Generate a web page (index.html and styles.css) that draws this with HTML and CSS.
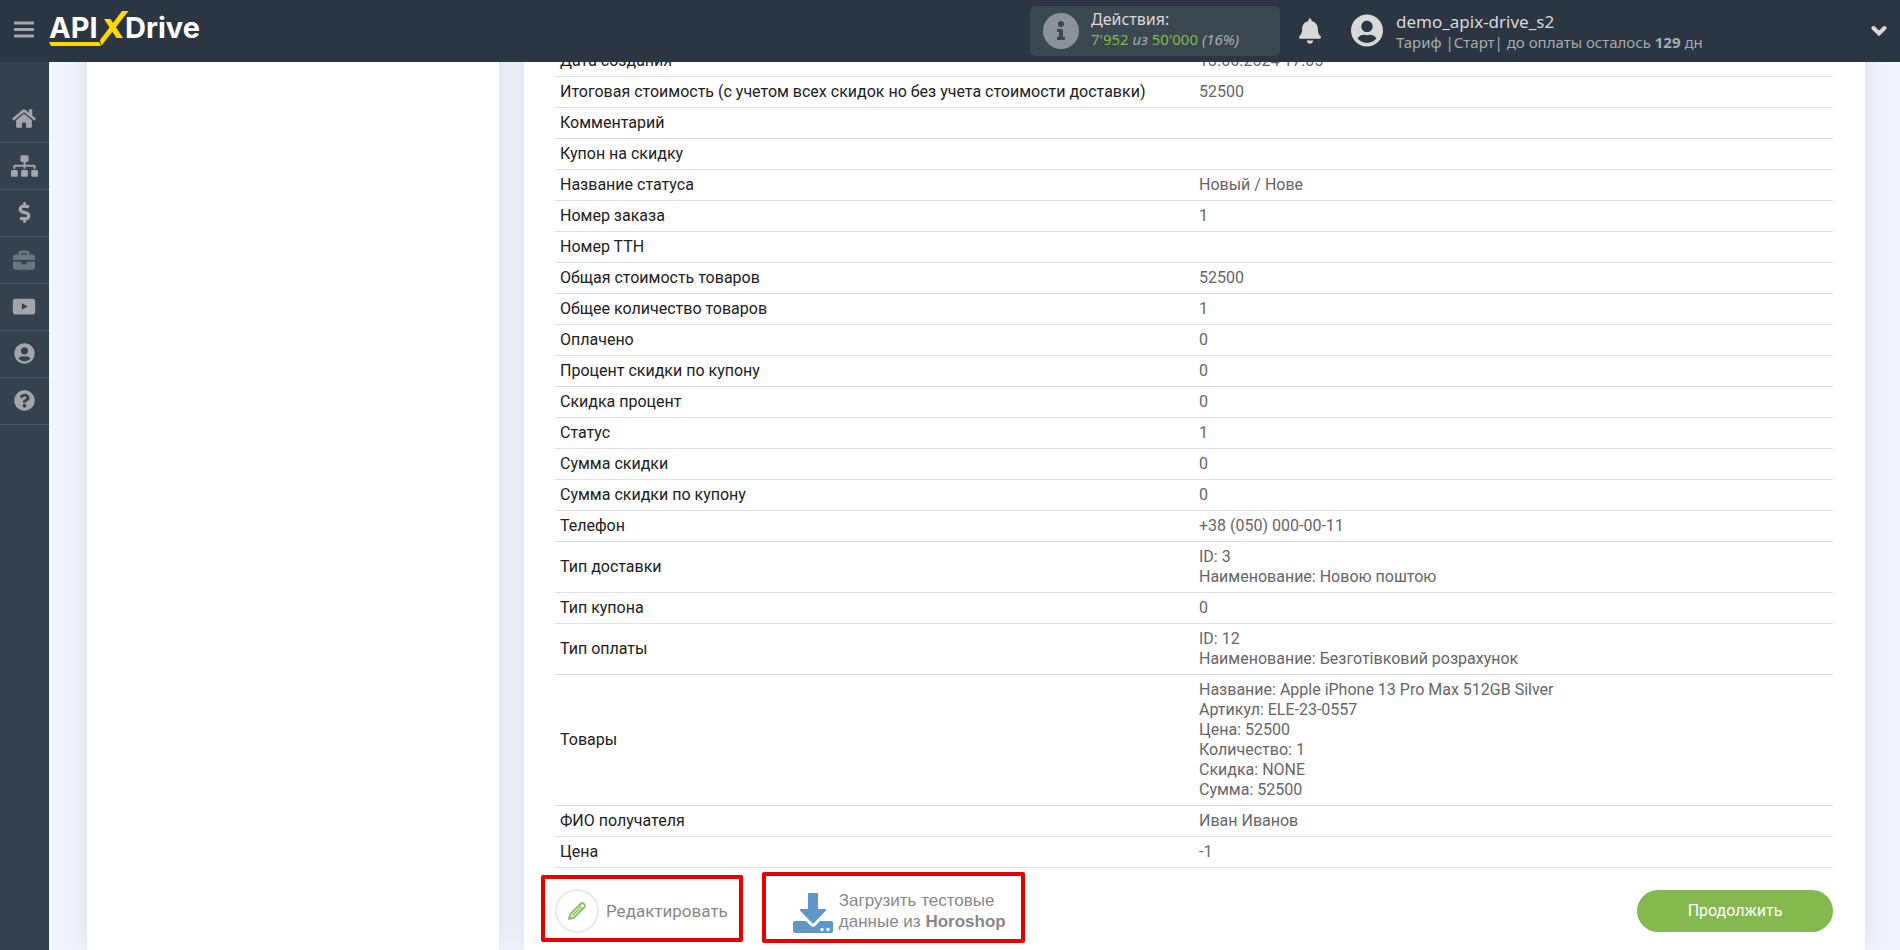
FILE: index.html
```html
<!DOCTYPE html>
<html lang="ru">
<head>
<meta charset="utf-8">
<title>APIXDrive</title>
<link rel="stylesheet" href="styles.css">
</head>
<body>
<header class="topbar">
  <button class="menu-btn" type="button" aria-label="Меню">
    <svg width="20" height="18" viewBox="0 0 20 18"><path d="M1 2h18M1 8.500h18M1 15h18" stroke="currentColor" stroke-width="3" stroke-linecap="round"/></svg>
  </button>
  <a class="logo" href="#" aria-label="APIXDrive">
    <svg width="156" height="40" viewBox="0 0 156 40">
      <text class="logo-text" x="0" y="27">API</text>
      <text class="logo-text" x="76" y="27">Drive</text>
      <path d="M55 8h6.500L74 27h-6.500z" fill="#ffd800"/>
      <path d="M73 0h6.500L53 34h-1l-1-5z" fill="#ffd800"/>
      <path d="M0 31h50l2 4H2z" fill="#ffd800"/>
    </svg>
  </a>
  <section class="usage">
    <svg class="usage-icon" width="36" height="36" viewBox="0 0 36 36"><circle cx="18" cy="18" r="18" fill="#8b9298"/><circle cx="18" cy="11" r="3" fill="#3b4850"/><path d="M14 16h6v8h2v3h-8v-3h2v-5h-2z" fill="#3b4850"/></svg>
    <div class="usage-body">
      <div class="usage-title">Действия:</div>
      <div class="usage-count"><span class="num">7'952</span> <i>из</i> <span class="num">50'000</span> <i>(16%)</i></div>
    </div>
  </section>
  <button class="bell" type="button" aria-label="Уведомления">
    <svg width="22" height="26" viewBox="0 0 448 512"><path fill="currentColor" d="M224 512c35.320 0 63.970-28.650 63.970-64H160.030c0 35.350 28.650 64 63.970 64zm215.390-149.710c-19.320-20.760-55.470-51.990-55.470-154.290 0-77.700-54.480-139.900-127.940-155.160V32c0-17.670-14.320-32-31.980-32s-31.980 14.330-31.980 32v20.840C118.560 68.100 64.080 130.300 64.080 208c0 102.300-36.150 133.530-55.470 154.290-6 6.450-8.660 14.160-8.610 21.710.110 16.400 12.980 32 32.100 32h383.800c19.120 0 32-15.600 32.100-32 .050-7.550-2.610-15.270-8.610-21.710z"/></svg>
  </button>
  <a class="account" href="#">
    <svg width="32" height="33" viewBox="0 0 496 512"><path fill="currentColor" d="M248 8C111 8 0 119 0 256s111 248 248 248 248-111 248-248S385 8 248 8zm0 96c48.600 0 88 39.400 88 88s-39.400 88-88 88-88-39.400-88-88 39.400-88 88-88zm0 344c-58.700 0-111.300-26.600-146.500-68.200 18.800-35.400 55.600-59.800 98.500-59.800 2.400 0 4.800.4 7.100 1.100 13 4.200 26.600 6.900 40.900 6.900 14.300 0 28-2.700 40.900-6.900 2.300-.7 4.700-1.100 7.100-1.100 42.900 0 79.700 24.400 98.500 59.800C359.300 421.400 306.700 448 248 448z"/></svg>
    <span class="account-body">
      <span class="account-name">demo_apix-drive_s2</span>
      <span class="account-plan">Тариф |Старт| до оплаты осталось <b>129</b> дн</span>
    </span>
  </a>
  <button class="chevron" type="button" aria-label="Развернуть">
    <svg width="16" height="12" viewBox="0 0 16 12"><path d="M2.500 3l5.500 5.500L13.500 3" fill="none" stroke="currentColor" stroke-width="4" stroke-linecap="round"/></svg>
  </button>
</header>

<nav class="sidebar">
  <a class="side-link" href="#" aria-label="Главная"><svg width="24" height="21" viewBox="0 0 576 512"><path fill="currentColor" d="M280.370 148.260L96 300.110V464a16 16 0 0 0 16 16l112.060-.290a16 16 0 0 0 15.920-16V368a16 16 0 0 1 16-16h64a16 16 0 0 1 16 16v95.640a16 16 0 0 0 16 16.050L464 480a16 16 0 0 0 16-16V300L295.670 148.260a12.190 12.190 0 0 0-15.300 0zM571.600 251.470L488 182.560V44.050a12 12 0 0 0-12-12h-56a12 12 0 0 0-12 12v72.610L318.470 43a48 48 0 0 0-61 0L4.340 251.470a12 12 0 0 0-1.600 16.900l25.500 31A12 12 0 0 0 45.150 301l235.220-193.740a12.190 12.190 0 0 1 15.300 0L530.900 301a12 12 0 0 0 16.900-1.600l25.500-31a12 12 0 0 0-1.700-16.930z"/></svg></a>
  <a class="side-link" href="#" aria-label="Связи"><svg width="27" height="22" viewBox="0 0 640 512"><path fill="currentColor" d="M128 352H32c-17.670 0-32 14.330-32 32v96c0 17.670 14.330 32 32 32h96c17.670 0 32-14.330 32-32v-96c0-17.670-14.330-32-32-32zm-24-80h192v48h48v-48h192v48h48v-57.590c0-21.170-17.230-38.410-38.410-38.410H344v-64h40c17.670 0 32-14.330 32-32V32c0-17.670-14.330-32-32-32H256c-17.670 0-32 14.330-32 32v96c0 17.670 14.330 32 32 32h40v64H94.410C73.230 224 56 241.230 56 262.410V320h48v-48zm264 80h-96c-17.670 0-32 14.330-32 32v96c0 17.670 14.330 32 32 32h96c17.670 0 32-14.330 32-32v-96c0-17.670-14.330-32-32-32zm240 0h-96c-17.670 0-32 14.330-32 32v96c0 17.670 14.330 32 32 32h96c17.670 0 32-14.330 32-32v-96c0-17.670-14.330-32-32-32z"/></svg></a>
  <a class="side-link" href="#" aria-label="Оплата"><svg width="13" height="21" viewBox="0 0 288 512"><path fill="currentColor" d="M209.200 233.400l-108-31.600C88.700 198.200 80 186.500 80 173.500c0-16.300 13.200-29.500 29.500-29.500h66.300c12.200 0 24.200 3.700 34.200 10.500 6.100 4.100 14.300 3.100 19.500-2l34.800-34c7.100-6.900 6.100-18.400-1.800-24.500C238 74.800 207.400 64.100 176 64V16c0-8.800-7.200-16-16-16h-32c-8.800 0-16 7.200-16 16v48h-2.500C45.800 64-5.400 118.700.5 183.600c4.200 46.100 39.400 83.600 83.800 96.600l102.500 30c12.500 3.700 21.200 15.300 21.200 28.300 0 16.300-13.200 29.500-29.500 29.500h-66.300C100 368 88 364.300 78 357.500c-6.100-4.100-14.300-3.100-19.500 2l-34.800 34c-7.100 6.900-6.100 18.400 1.800 24.500 24.500 19.200 55.100 29.900 86.500 30v48c0 8.800 7.200 16 16 16h32c8.800 0 16-7.200 16-16v-48.200c46.600-.9 90.300-28.600 105.700-72.700 21.500-61.600-14.600-124.800-72.500-141.700z"/></svg></a>
  <a class="side-link dim" href="#" aria-label="Проекты"><svg width="22" height="22" viewBox="0 0 512 512"><path fill="currentColor" d="M320 336c0 8.840-7.160 16-16 16h-96c-8.840 0-16-7.160-16-16v-48H0v144c0 25.600 22.400 48 48 48h416c25.600 0 48-22.400 48-48V288H320v48zm144-208h-80V80c0-25.600-22.400-48-48-48H176c-25.600 0-48 22.400-48 48v48H48c-25.600 0-48 22.400-48 48v80h512v-80c0-25.600-22.400-48-48-48zm-144 0H192V96h128v32z"/></svg></a>
  <a class="side-link" href="#" aria-label="Видео"><svg width="24" height="21" viewBox="0 0 576 512"><path fill="currentColor" fill-rule="evenodd" d="M80 64h416q64 0 64 64v256q0 64-64 64H80q-64 0-64-64V128q0-64 64-64zM236 176v160l140-80z"/></svg></a>
  <a class="side-link" href="#" aria-label="Профиль"><svg width="21" height="21" viewBox="0 0 496 512"><path fill="currentColor" d="M248 8C111 8 0 119 0 256s111 248 248 248 248-111 248-248S385 8 248 8zm0 96c48.600 0 88 39.400 88 88s-39.400 88-88 88-88-39.400-88-88 39.400-88 88-88zm0 344c-58.700 0-111.300-26.600-146.500-68.200 18.800-35.400 55.600-59.800 98.500-59.800 2.400 0 4.800.4 7.100 1.100 13 4.200 26.600 6.900 40.900 6.900 14.300 0 28-2.700 40.900-6.900 2.300-.7 4.700-1.100 7.100-1.100 42.900 0 79.700 24.400 98.500 59.800C359.300 421.400 306.700 448 248 448z"/></svg></a>
  <a class="side-link" href="#" aria-label="Помощь"><svg width="21" height="21" viewBox="0 0 512 512"><path fill="currentColor" d="M504 256c0 136.997-111.043 248-248 248S8 392.997 8 256C8 119.083 119.043 8 256 8s248 111.083 248 248zM262.655 90c-54.497 0-89.255 22.957-116.549 63.758-3.536 5.286-2.353 12.415 2.715 16.258l34.699 26.310c5.205 3.947 12.621 3.008 16.665-2.122 17.864-22.658 30.113-35.797 57.303-35.797 20.429 0 45.698 13.148 45.698 32.958 0 14.976-12.363 22.667-32.534 33.976C247.128 238.528 216 254.941 216 296v4c0 6.627 5.373 12 12 12h56c6.627 0 12-5.373 12-12v-1.333c0-28.462 83.186-29.647 83.186-106.667 0-58.002-60.165-102-116.531-102zM256 338c-25.365 0-46 20.635-46 46 0 25.364 20.635 46 46 46s46-20.636 46-46c0-25.365-20.635-46-46-46z"/></svg></a>
</nav>

<main class="content">
  <aside class="panel"></aside>
  <section class="panel details">
    <table class="fields">
      <tr><th scope="row">Дата создания</th><td>13.06.2024 17:05</td></tr>
      <tr><th scope="row">Итоговая стоимость (с учетом всех скидок но без учета стоимости доставки)</th><td>52500</td></tr>
      <tr><th scope="row">Комментарий</th><td></td></tr>
      <tr><th scope="row">Купон на скидку</th><td></td></tr>
      <tr><th scope="row">Название статуса</th><td>Новый / Нове</td></tr>
      <tr><th scope="row">Номер заказа</th><td>1</td></tr>
      <tr><th scope="row">Номер ТТН</th><td></td></tr>
      <tr><th scope="row">Общая стоимость товаров</th><td>52500</td></tr>
      <tr><th scope="row">Общее количество товаров</th><td>1</td></tr>
      <tr><th scope="row">Оплачено</th><td>0</td></tr>
      <tr><th scope="row">Процент скидки по купону</th><td>0</td></tr>
      <tr><th scope="row">Скидка процент</th><td>0</td></tr>
      <tr><th scope="row">Статус</th><td>1</td></tr>
      <tr><th scope="row">Сумма скидки</th><td>0</td></tr>
      <tr><th scope="row">Сумма скидки по купону</th><td>0</td></tr>
      <tr><th scope="row">Телефон</th><td>+38 (050) 000-00-11</td></tr>
      <tr><th scope="row">Тип доставки</th><td>ID: 3<br>Наименование: Новою поштою</td></tr>
      <tr><th scope="row">Тип купона</th><td>0</td></tr>
      <tr><th scope="row">Тип оплаты</th><td>ID: 12<br>Наименование: Безготівковий розрахунок</td></tr>
      <tr><th scope="row">Товары</th><td>Название: Apple iPhone 13 Pro Max 512GB Silver<br>Артикул: ELE-23-0557<br>Цена: 52500<br>Количество: 1<br>Скидка: NONE<br>Сумма: 52500</td></tr>
      <tr><th scope="row">ФИО получателя</th><td>Иван Иванов</td></tr>
      <tr><th scope="row">Цена</th><td>-1</td></tr>
    </table>
    <div class="actions">
      <button class="action edit" type="button">
        <span class="edit-icon"><svg width="20" height="20" viewBox="0 0 20 20" fill="none" stroke="#8cc162" stroke-width="2" stroke-linejoin="round"><path d="M2 18l1.500-5L14 2.500q1.500-1 2.700.3l.8.8q1 1.200 0 2.400L7 16.500z"/><path d="M12 4.500L15.500 8M5.500 14.500L13 7" stroke-width="1.500"/></svg></span>
        <span>Редактировать</span>
      </button>
      <button class="action load" type="button">
        <svg width="40" height="40" viewBox="0 0 40 40" fill="#5e96c8"><path d="M16 0h8q1 0 1 1v15h7q2 0 1 1.500L21 30q-1 1-2 0L7 17.500Q6 16 8 16h7V1q0-1 1-1z"/><path d="M2 28h11l5 5q2 1.500 4 0l5-5h11q2 0 2 2v8q0 2-2 2H2q-2 0-2-2v-8q0-2 2-2z"/><circle cx="29" cy="36.500" r="1.700" fill="#fff"/><circle cx="35" cy="36.500" r="1.700" fill="#fff"/></svg>
        <span>Загрузить тестовые<br>данные из <b>Horoshop</b></span>
      </button>
      <button class="continue" type="button">Продолжить</button>
    </div>
  </section>
</main>
</body>
</html>
```
FILE: styles.css
```css
* {
  box-sizing: border-box;
}

body {
  margin: 0;
  background: #f2f6fc;
  font-family: Roboto, sans-serif;
  font-size: 16px;
  line-height: 20px;
  overflow: hidden;
}

button {
  padding: 0;
  border: 0;
  background: none;
  font: inherit;
  cursor: pointer;
}

a {
  color: inherit;
  text-decoration: none;
}

svg {
  display: block;
  flex: none;
}

.topbar {
  position: fixed;
  inset: 0 0 auto 0;
  z-index: 2;
  display: flex;
  align-items: center;
  height: 62px;
  padding: 0 13px 0 14px;
  background: #2b3642;
  color: #d9d9d9;
  font-family: "Noto Sans", sans-serif;
}

.menu-btn {
  padding-bottom: 2px;
  color: #a2a6aa;
}

.logo {
  margin: 0 auto 0 15px;
}

.logo-text {
  fill: #fff;
  font-family: Inter, sans-serif;
  font-size: 29px;
  font-weight: 700;
}

.usage {
  display: flex;
  align-items: center;
  gap: 12px;
  width: 250px;
  height: 50px;
  padding-left: 13px;
  border-radius: 5px;
  background: #3b4850;
}

.usage-body {
  padding-bottom: 5px;
}

.usage-title {
  font-size: 16px;
}

.usage-count {
  font-size: 15px;
  color: #a5abb0;
}

.num {
  color: #7fb84e;
}

.bell {
  margin: 0 30px 0 19px;
  color: #d9d9d9;
}

.account {
  display: flex;
  align-items: center;
  gap: 13px;
  width: 520px;
}

.account svg {
  margin-bottom: 2px;
}

.account-body {
  display: flex;
  flex-direction: column;
  padding-top: 2px;
}

.account-name {
  font-size: 17px;
}

.account-plan {
  font-size: 15px;
  color: #a5abb0;
}

.chevron {
  color: #d9d9d9;
}

.sidebar {
  position: fixed;
  inset: 62px auto 0 0;
  z-index: 1;
  display: flex;
  flex-direction: column;
  width: 49px;
  padding-top: 34px;
  background: #36414e;
}

.side-link {
  display: flex;
  align-items: center;
  justify-content: center;
  height: 47px;
  padding: 0 1px 1px 0;
  border-bottom: 1px solid #4c5764;
  color: #a2a6aa;
}

.dim {
  color: #6c757e;
}

.content {
  display: grid;
  grid-template-columns: 412px 1fr;
  gap: 25px;
  min-height: 100vh;
  padding: 0 35px 0 87px;
}

.panel {
  background: #fff;
  box-shadow: 0 0 25px rgba(0, 0, 0, 0.1);
}

.details {
  padding: 46px 32px 0 31px;
}

.fields {
  width: 100%;
  table-layout: fixed;
  border-collapse: separate;
  border-spacing: 0;
}

.fields th,
.fields td {
  height: 31px;
  padding: 5px;
  border-bottom: 1px solid #dedfe0;
  text-align: left;
  vertical-align: middle;
}

.fields th {
  color: #212121;
  font-weight: 400;
}

.fields td {
  color: #666;
}

.actions {
  display: flex;
  align-items: center;
  margin: 4px 0 0 -14px;
}

.action {
  display: flex;
  align-items: center;
  border: 4px solid #e60000;
  border-radius: 2px;
  color: #888;
  font-size: 17px;
  line-height: 21px;
  text-align: left;
}

.edit {
  gap: 7px;
  height: 67px;
  margin-top: 2px;
  padding: 5px 11px 0 10px;
}

.edit-icon {
  display: grid;
  place-items: center;
  width: 44px;
  height: 44px;
  border: 2px solid #e3ecea;
  border-radius: 50%;
}

.load {
  gap: 6px;
  height: 71px;
  margin-left: 19px;
  padding: 6px 15px 0 27px;
  font-family: "Liberation Sans", sans-serif;
}

.load svg {
  margin-top: 4px;
}

.continue {
  width: 196px;
  height: 42px;
  margin: 7px 0 0 auto;
  border-radius: 21px;
  background: #86b850;
  color: #fff;
}
```
